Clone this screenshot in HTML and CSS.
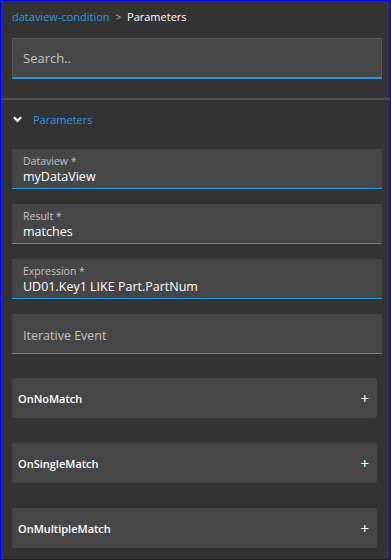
FILE: index.html
```html
<!DOCTYPE html>
<html lang="en">
<head>
    <meta charset="UTF-8">
    <meta name="viewport" content="width=device-width, initial-scale=1.0">
    <title>Parameters</title>
    <link rel="stylesheet" href="styles.css">
</head>
<body>

    <div class="frame">
        <!-- breadcrumb -->
        <div class="crumbs">
            <a class="crumb-link">dataview-condition</a>
            <span class="crumb-sep">&gt;</span>
            <span class="crumb-current">Parameters</span>
        </div>

        <div class="search-wrap">
            <input class="search" type="text" placeholder="Search..">
        </div>

        <hr class="divider">

        <div class="section-head">
            <svg class="chevron" width="9" height="7" viewBox="0 0 9 7">
                <path d="M1 1.2 L4.5 4.8 L8 1.2" fill="none" stroke="#fff" stroke-width="2.2"/>
            </svg>
            <span>Parameters</span>
        </div>

        <div class="fields">
            <div class="field">
                <label>Dataview *</label>
                <div class="value">myDataView</div>
            </div>
            <div class="field">
                <label>Result *</label>
                <div class="value">matches</div>
            </div>
            <div class="field">
                <label>Expression *</label>
                <div class="value">UD01.Key1 LIKE Part.PartNum</div>
            </div>
            <div class="field field-empty">
                <span class="placeholder">Iterative Event</span>
            </div>
        </div>

        <div class="events">
            <div class="event">
                <span>OnNoMatch</span>
                <span class="plus">+</span>
            </div>
            <div class="event">
                <span>OnSingleMatch</span>
                <span class="plus">+</span>
            </div>
            <div class="event">
                <span>OnMultipleMatch</span>
                <span class="plus">+</span>
            </div>
        </div>
    </div>

</body>
</html>
```

FILE: styles.css
```css
html, body {
    margin: 0;
    padding: 0;
    height: 100%;
}
body {
    font-family: 'Open Sans', 'Noto Sans', sans-serif;
    background-color: #333;
    color: #fff;
}
.frame {
    box-sizing: border-box;
    height: 560px;
    border: 1px solid #0000ff;
    overflow: hidden;
}
.crumbs {
    padding: 7px 11px 0 11px;
    height: 23px;
    font-size: 11px;
    line-height: 18px;
}
.crumb-link {
    color: #2b9be0;
}
.crumb-sep {
    color: #bbb;
    margin: 0 3px;
    font-size: 10px;
}
.crumb-current {
    color: #fff;
    font-weight: 500;
}
.search-wrap {
    padding: 7px 8px 0 11px;
}
.search {
    box-sizing: border-box;
    width: 100%;
    height: 41px;
    background-color: #464646;
    border: 1px solid #5c5c5c;
    border-bottom: 2px solid #1c9ae6;
    padding: 0 10px;
    font-family: inherit;
    font-size: 13px;
    color: #fff;
    outline: none;
}
.search::placeholder {
    color: #c4c4c4;
}
.divider {
    border: none;
    border-top: 2px solid #4e4e4e;
    margin: 19px 0 0 0;
}
.section-head {
    display: flex;
    align-items: center;
    height: 38px;
    padding: 0 12px;
    color: #2b9be0;
    font-size: 11px;
}
.chevron {
    margin-right: 11px;
}
.fields {
    display: flex;
    flex-direction: column;
    gap: 15px;
    padding: 11px 8px 0 11px;
}
.field {
    box-sizing: border-box;
    height: 40px;
    background-color: #464646;
    border-bottom: 1px solid #1c9ae6;
    padding: 5px 11px 0 11px;
}
.field label {
    display: block;
    font-size: 10.5px;
    line-height: 14px;
    color: #c4c4c4;
}
.field .value {
    font-size: 12.5px;
    line-height: 17px;
    color: #fff;
}
.field-empty {
    display: flex;
    align-items: center;
    padding-top: 4px;
}
.placeholder {
    font-size: 12.5px;
    color: #c4c4c4;
}
.events {
    display: flex;
    flex-direction: column;
    gap: 25px;
    padding: 24px 13px 0 11px;
}
.event {
    display: flex;
    justify-content: space-between;
    align-items: center;
    height: 40px;
    background-color: #464646;
    border-radius: 3px;
    padding: 0 8px 0 6px;
    font-size: 11px;
    font-weight: 600;
}
.plus {
    font-size: 15px;
    font-weight: 400;
}
```
